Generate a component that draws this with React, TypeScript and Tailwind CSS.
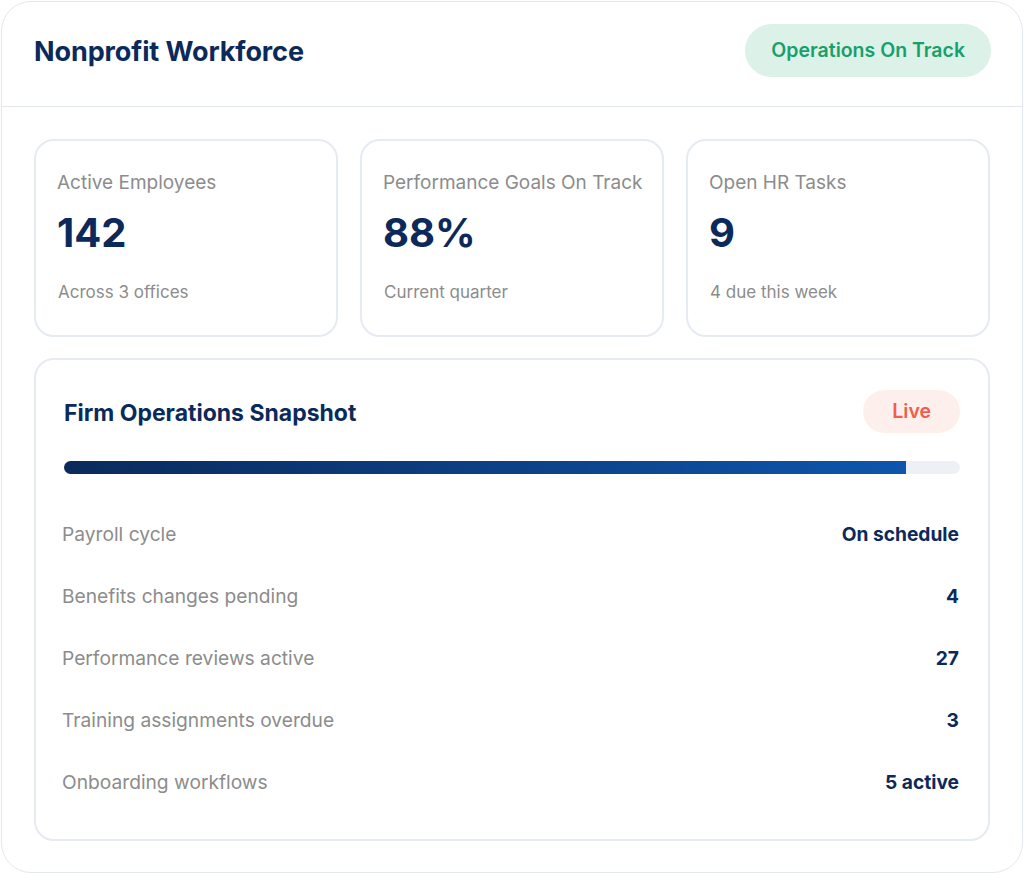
import React from 'react';

const stats = [
  { label: 'Active Employees', value: '142', note: 'Across 3 offices' },
  { label: 'Performance Goals On Track', value: '88%', note: 'Current quarter' },
  { label: 'Open HR Tasks', value: '9', note: '4 due this week' },
];

const rows = [
  { label: 'Payroll cycle', value: 'On schedule' },
  { label: 'Benefits changes pending', value: '4' },
  { label: 'Performance reviews active', value: '27' },
  { label: 'Training assignments overdue', value: '3' },
  { label: 'Onboarding workflows', value: '5 active' },
];

export default function App() {
  return (
    <div className="bg-white p-px font-['Inter',sans-serif]">
      <div className="w-[1022px] h-[872px] rounded-[30px] border border-[#e3e8f0] bg-white">
        {/* header */}
        <div className="flex h-[105px] items-center justify-between border-b border-[#e3e8f0] pl-8 pr-[31px] pb-[4px]">
          <h1 className="text-[27px] font-bold tracking-[-0.1px] text-[#0b2a5b]">Nonprofit Workforce</h1>
          <span className="mb-[3px] flex h-[53px] items-center rounded-full bg-[#dcf1e8] px-[26px] text-[19.5px] font-semibold text-[#17a06b]">
            Operations On Track
          </span>
        </div>

        <div className="px-[32px] pt-[32px]">
          <div className="grid grid-cols-3 gap-[22px]">
            {stats.map((s) => (
              <div key={s.label} className="h-[198px] rounded-[20px] border-2 border-[#e6eaf2] pl-[21px] pr-2 pt-[29px]">
                <div className="whitespace-nowrap text-[19px] leading-[26px] text-[#8c8c8c]">{s.label}</div>
                <div className="mt-[12px] text-[40px] font-bold leading-[50px] text-[#0b2a5b]">{s.value}</div>
                <div className="mt-[22px] pl-px text-[17px] leading-[24px] text-[#8c8c8c]">{s.note}</div>
              </div>
            ))}
          </div>

          <div className="mt-[21px] h-[483px] rounded-[20px] border-2 border-[#e6eaf2] px-[28px] pt-[30px]">
            <div className="flex items-center justify-between">
              <h2 className="mt-[3px] text-[23px] font-bold text-[#0b2a5b]">Firm Operations Snapshot</h2>
              <span className="flex h-[43px] items-center rounded-full bg-[#fdf0ec] px-[29px] text-[19.5px] font-semibold text-[#f35b4a]">
                Live
              </span>
            </div>
            <div className="mt-[28px] h-[13px] w-full rounded-full bg-[#edf0f5]">
              <div
                className="h-full rounded-l-full bg-gradient-to-r from-[#0a2a5c] to-[#0d56ad]"
                style={{ width: '94%' }}
              />
            </div>
            <div className="mt-[43px] flex flex-col gap-[28px]">
              {rows.map((r) => (
                <div key={r.label} className="flex items-center justify-between leading-[34px]">
                  <span className="-ml-[2px] text-[19.2px] text-[#8c8c8c]">{r.label}</span>
                  <span className="mr-px text-[19.2px] font-bold text-[#0b2a5b]">{r.value}</span>
                </div>
              ))}
            </div>
          </div>
        </div>
      </div>
    </div>
  );
}
